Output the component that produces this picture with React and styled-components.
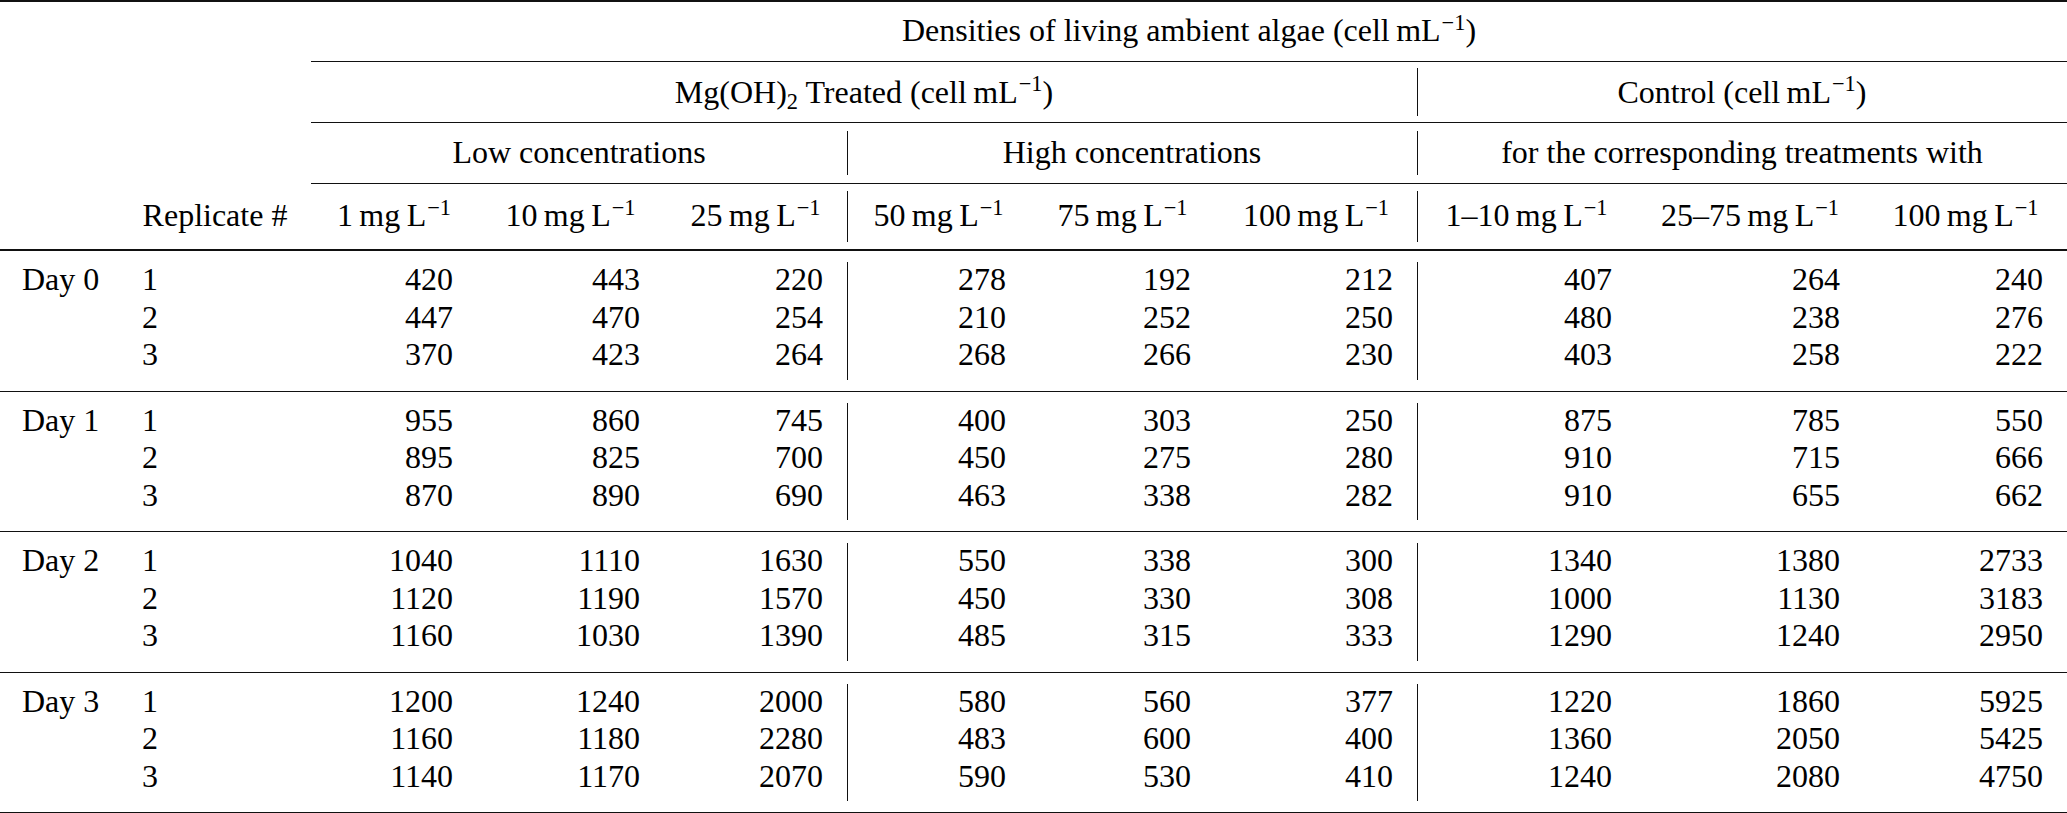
import React from 'react';
import styled, { createGlobalStyle, css } from 'styled-components';

const GlobalStyle = createGlobalStyle`
  html, body { margin: 0; padding: 0; background: #fff; }
  body { font-family: "Liberation Serif", "Times New Roman", serif; color: #000; }
`;

const COLS = [119, 192, 166, 187, 183, 183, 185, 202, 219, 228, 203];
const INK = '#111';

const Table = styled.table`
  width: 2067px;
  table-layout: fixed;
  border-collapse: separate;
  border-spacing: 0;
  border-top: 2px solid ${INK};
  font-family: "Liberation Serif", "Times New Roman", serif;
  font-size: 32px;
  line-height: 37.5px;
  color: #000;
`;

const vlineCss = css`
  &::before {
    content: '';
    position: absolute;
    left: 0;
    top: ${(p) => p.$top}px;
    bottom: ${(p) => p.$bottom}px;
    width: 1px;
    background: ${INK};
  }
`;

const HeadRow = styled.tr`
  & > th {
    padding-top: ${(p) => p.$pt}px;
    padding-bottom: ${(p) => p.$pb}px;
  }
`;

const HeadCell = styled.th`
  position: relative;
  font-weight: normal;
  text-align: center;
  white-space: nowrap;
  padding-left: 0;
  padding-right: 0;
  border-bottom: ${(p) => (p.$rule ? `${p.$rule}px solid ${INK}` : 'none')};
  ${(p) => p.$vline && vlineCss}
`;

const DataRow = styled.tr`
  & > td {
    padding-top: ${(p) => (p.$first ? 10 : 0)}px;
    padding-bottom: ${(p) => (p.$last ? 17 : 0)}px;
    border-bottom: ${(p) => (p.$last ? `${p.$rule}px solid ${INK}` : 'none')};
  }
`;

const Cell = styled.td`
  position: relative;
  white-space: nowrap;
  text-align: ${(p) => p.$align || 'right'};
  padding-left: ${(p) => (p.$align === 'left' ? p.$pl : 0)}px;
  padding-right: ${(p) => (p.$align === 'left' ? 0 : 24)}px;
  ${(p) => p.$vline && vlineCss}
`;

const Sup = styled.sup`
  font-size: 0.7em;
  line-height: 0;
  vertical-align: 0.5em;
  margin-left: 1px;
`;

const Sub = styled.sub`
  font-size: 0.7em;
  line-height: 0;
  vertical-align: -0.28em;
`;

const Unit = ({ pre }) => (
  <>
    {pre}
    {'\u2009'}mg{'\u2009'}L<Sup>−1</Sup>
  </>
);

const CellUnit = () => (
  <>
    cell{'\u2009'}mL<Sup>−1</Sup>
  </>
);

const GROUPS = [
  {
    day: 'Day 0',
    rows: [
      [420, 443, 220, 278, 192, 212, 407, 264, 240],
      [447, 470, 254, 210, 252, 250, 480, 238, 276],
      [370, 423, 264, 268, 266, 230, 403, 258, 222],
    ],
  },
  {
    day: 'Day 1',
    rows: [
      [955, 860, 745, 400, 303, 250, 875, 785, 550],
      [895, 825, 700, 450, 275, 280, 910, 715, 666],
      [870, 890, 690, 463, 338, 282, 910, 655, 662],
    ],
  },
  {
    day: 'Day 2',
    rows: [
      [1040, 1110, 1630, 550, 338, 300, 1340, 1380, 2733],
      [1120, 1190, 1570, 450, 330, 308, 1000, 1130, 3183],
      [1160, 1030, 1390, 485, 315, 333, 1290, 1240, 2950],
    ],
  },
  {
    day: 'Day 3',
    rows: [
      [1200, 1240, 2000, 580, 560, 377, 1220, 1860, 5925],
      [1160, 1180, 2280, 483, 600, 400, 1360, 2050, 5425],
      [1140, 1170, 2070, 590, 530, 410, 1240, 2080, 4750],
    ],
  },
];

const CONC = ['1', '10', '25', '50', '75', '100', '1–10', '25–75', '100'];
const VLINE_COLS = [3, 6];

export default function App() {
  return (
    <>
      <GlobalStyle />
      <Table>
        <colgroup>
          {COLS.map((w, i) => (
            <col key={i} style={{ width: w }} />
          ))}
        </colgroup>
        <thead>
          <HeadRow $pt={10} $pb={11}>
            <HeadCell colSpan={2} />
            <HeadCell colSpan={9} $rule={1}>
              Densities of living ambient algae (<CellUnit />)
            </HeadCell>
          </HeadRow>
          <HeadRow $pt={12} $pb={11}>
            <HeadCell colSpan={2} />
            <HeadCell colSpan={6} $rule={1}>
              Mg(OH)<Sub>2</Sub> Treated (<CellUnit />)
            </HeadCell>
            <HeadCell colSpan={3} $rule={1} $vline $top={6} $bottom={6}>
              Control (<CellUnit />)
            </HeadCell>
          </HeadRow>
          <HeadRow $pt={11} $pb={11.5}>
            <HeadCell colSpan={2} />
            <HeadCell colSpan={3} $rule={1}>
              Low concentrations
            </HeadCell>
            <HeadCell colSpan={3} $rule={1} $vline $top={8} $bottom={8}>
              High concentrations
            </HeadCell>
            <HeadCell colSpan={3} $rule={1} $vline $top={8} $bottom={8}>
              for the corresponding treatments with
            </HeadCell>
          </HeadRow>
          <HeadRow $pt={13} $pb={14.5}>
            <HeadCell $rule={2} />
            <HeadCell $rule={2}>Replicate #</HeadCell>
            {CONC.map((c, i) => (
              <HeadCell
                key={i}
                $rule={2}
                $vline={VLINE_COLS.includes(i)}
                $top={7}
                $bottom={7}
              >
                <Unit pre={c} />
              </HeadCell>
            ))}
          </HeadRow>
        </thead>
        {GROUPS.map((g, gi) => (
          <tbody key={g.day}>
            {g.rows.map((r, ri) => {
              const first = ri === 0;
              const last = ri === g.rows.length - 1;
              return (
                <DataRow
                  key={ri}
                  $first={first}
                  $last={last}
                  $rule={gi === GROUPS.length - 1 ? 2 : 1}
                >
                  <Cell $align="left" $pl={22}>
                    {first ? g.day : ''}
                  </Cell>
                  <Cell $align="left" $pl={23}>
                    {ri + 1}
                  </Cell>
                  {r.map((v, vi) => (
                    <Cell
                      key={vi}
                      $vline={VLINE_COLS.includes(vi)}
                      $top={first ? 11 : 0}
                      $bottom={last ? 11 : 0}
                    >
                      {v}
                    </Cell>
                  ))}
                </DataRow>
              );
            })}
          </tbody>
        ))}
      </Table>
    </>
  );
}
